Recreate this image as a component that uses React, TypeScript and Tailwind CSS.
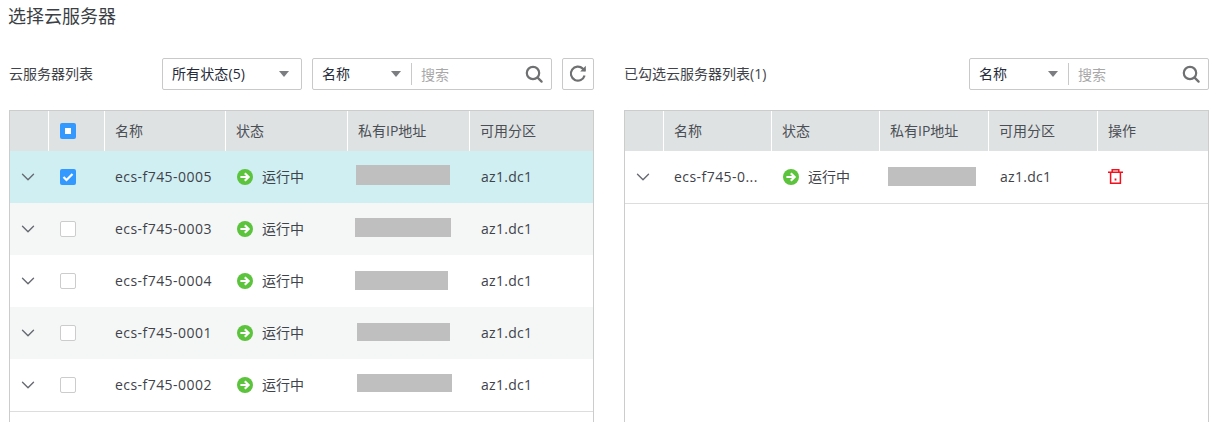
import { ChevronDown } from 'lucide-react';

const FONT = "font-['Open_Sans','Noto_Sans_CJK_SC',sans-serif]";

const LEFT_GRID = 'grid grid-cols-[38px_56px_121px_122px_122px_124px]';
const RIGHT_GRID = 'grid grid-cols-[38px_108px_108px_109px_109px_111px]';

const ROWS = [
  { name: 'ecs-f745-0005', mask: 'ml-[9px] mt-[14px] h-[20px] w-[94px]', bg: 'bg-[#d0eff3]', checked: true },
  { name: 'ecs-f745-0003', mask: 'ml-[8px] mt-[15px] h-[19px] w-[96px]', bg: 'bg-[#f5f7f7]', checked: false },
  { name: 'ecs-f745-0004', mask: 'ml-[8px] mt-[16px] h-[19px] w-[93px]', bg: 'bg-white', checked: false },
  { name: 'ecs-f745-0001', mask: 'ml-[10px] mt-[16px] h-[18px] w-[93px]', bg: 'bg-[#f5f7f7]', checked: false },
  { name: 'ecs-f745-0002', mask: 'ml-[10px] mt-[15px] h-[18px] w-[95px]', bg: 'bg-white', checked: false },
];

function Caret() {
  return (
    <svg width="10" height="6" viewBox="0 0 10 6" className="shrink-0">
      <path d="M0 0h10L5 6z" fill="#7b7d80" />
    </svg>
  );
}

function SearchIcon() {
  return (
    <svg width="18" height="18" viewBox="0 0 18 18" fill="none" stroke="#6f7072" strokeWidth="2.2" className="shrink-0">
      <circle cx="8" cy="8" r="6.2" />
      <path d="M12.6 12.6L16.6 16.6" strokeLinecap="round" />
    </svg>
  );
}

function StatusIcon() {
  return (
    <svg width="16" height="16" viewBox="0 0 16 16" className="shrink-0">
      <circle cx="8" cy="8" r="8" fill="#5cc33c" />
      <path d="M3.4 8h8M7.8 4.2L11.6 8 7.8 11.8" fill="none" stroke="#fff" strokeWidth="2.2" />
    </svg>
  );
}

function TrashIcon() {
  return (
    <svg width="15" height="15" viewBox="0 0 15 15" fill="none" stroke="#f40f1c" strokeWidth="1.5">
      <path d="M0 3.3h15M4.2 3.3V.8h6.6v2.5M2.6 3.3v11h9.8v-11" />
      <path d="M7.5 9.5v2" strokeWidth="1.8" />
    </svg>
  );
}

function Checkbox({ state }: { state: 'on' | 'off' | 'some' }) {
  if (state === 'off') {
    return <span className="block h-[16px] w-[16px] rounded-[2px] border border-[#cccccc] bg-white" />;
  }
  return (
    <span className="flex h-[16px] w-[16px] items-center justify-center rounded-[2px] bg-[#3399ff]">
      {state === 'some' ? (
        <span className="block h-[6px] w-[6px] bg-white" />
      ) : (
        <svg width="12" height="10" viewBox="0 0 12 10" fill="none" stroke="#fff" strokeWidth="2.2">
          <path d="M1.5 5l3 3 6-6" />
        </svg>
      )}
    </span>
  );
}

function SearchBox() {
  return (
    <div className="flex h-[32px] w-[240px] items-center rounded-[2px] border border-[#c9c9c9] bg-white">
      <div className="flex w-[98px] items-center justify-between pl-[9px] pr-[10px] text-[#252b3a]">
        <span>名称</span>
        <Caret />
      </div>
      <span className="h-[22px] w-px bg-[#c9c9c9]" />
      <span className="flex-1 pl-[9px] pt-px text-[#a8a8a8]">搜索</span>
      <span className="pr-[8px]">
        <SearchIcon />
      </span>
    </div>
  );
}

function Head({ labels, grid, check }: { labels: string[]; grid: string; check?: boolean }) {
  return (
    <div className={`${grid} h-[40px] bg-[#dfe2e2] text-[#4a4e55]`}>
      {labels.map((label, i) => (
        <div key={i} className={`flex items-center pl-[10px] ${i > 0 ? 'border-l border-white' : ''}`}>
          {check && i === 1 ? (
            <span className="pl-px">
              <Checkbox state="some" />
            </span>
          ) : (
            label
          )}
        </div>
      ))}
    </div>
  );
}

function Expand() {
  return (
    <div className="flex items-center justify-center pr-[2px]">
      <ChevronDown size={22} strokeWidth={1.5} color="#666a70" />
    </div>
  );
}

function Status() {
  return (
    <div className="flex items-center gap-[9px] pl-[12px] text-[#3f434a]">
      <StatusIcon />
      <span>运行中</span>
    </div>
  );
}

export default function App() {
  return (
    <div className={`${FONT} h-[422px] w-[1214px] overflow-hidden bg-white text-[14px] leading-[20px] text-[#252b3a]`}>
      <h1 className="h-[58px] pl-[8px] pt-[3px] text-[18px] leading-[26px] text-[#3c3f45]">选择云服务器</h1>

      <div className="flex gap-[30px] pl-[9px]">
        {/* available servers */}
        <div className="w-[585px]">
          <div className="flex h-[32px] items-center">
            <span className="w-[153px] text-[#3f434a]">云服务器列表</span>
            <div className="flex h-[32px] w-[140px] items-center justify-between rounded-[2px] border border-[#c9c9c9] pl-[9px] pr-[12px]">
              <span className="tracking-[0.1px]">所有状态(5)</span>
              <Caret />
            </div>
            <div className="ml-[10px]">
              <SearchBox />
            </div>
            <button
              type="button"
              className="ml-[10px] flex h-[32px] w-[32px] items-center justify-center rounded-[2px] border border-[#c9c9c9]"
            >
              <svg width="20" height="20" viewBox="0 0 20 20" fill="none" stroke="#6f7072" strokeWidth="2.2">
                <path d="M16.6 11.5A7 7 0 1 1 14.8 4.6L17 6.6" />
                <path d="M17.8 1.8v5.6h-5.6" fill="#6f7072" stroke="none" />
              </svg>
            </button>
          </div>

          <div className="mt-[20px] h-[400px] border border-b-0 border-[#cccccc]">
            <Head labels={['', '', '名称', '状态', '私有IP地址', '可用分区']} grid={LEFT_GRID} check />
            {ROWS.map((row) => (
              <div key={row.name} className={`${LEFT_GRID} h-[52px] ${row.bg}`}>
                <Expand />
                <div className="flex items-center pl-[12px]">
                  <Checkbox state={row.checked ? 'on' : 'off'} />
                </div>
                <div className="flex items-center pl-[11px] tracking-[0.45px] text-[#3f434a]">{row.name}</div>
                <Status />
                <div>
                  <div className={`${row.mask} bg-[#bfbfbf]`} />
                </div>
                <div className="flex items-center pl-[12px] tracking-[0.3px] text-[#3f434a]">az1.dc1</div>
              </div>
            ))}
            <div className="h-px bg-[#dddddd]" />
          </div>
        </div>

        {/* picked servers */}
        <div className="w-[585px]">
          <div className="flex h-[32px] items-center justify-between">
            <span className="text-[#3f434a]">已勾选云服务器列表(1)</span>
            <SearchBox />
          </div>

          <div className="mt-[20px] h-[400px] border border-b-0 border-[#cccccc]">
            <Head labels={['', '名称', '状态', '私有IP地址', '可用分区', '操作']} grid={RIGHT_GRID} />
            <div className={`${RIGHT_GRID} h-[53px] border-b border-[#dddddd]`}>
              <Expand />
              <div className="flex items-center pl-[11px] tracking-[0.45px] text-[#3f434a]">ecs-f745-0...</div>
              <Status />
              <div>
                <div className="ml-[9px] mt-[16px] h-[19px] w-[88px] bg-[#bfbfbf]" />
              </div>
              <div className="flex items-center pl-[12px] tracking-[0.3px] text-[#3f434a]">az1.dc1</div>
              <div className="flex items-center pl-[11px] pb-[2px]">
                <TrashIcon />
              </div>
            </div>
          </div>
        </div>
      </div>
    </div>
  );
}
